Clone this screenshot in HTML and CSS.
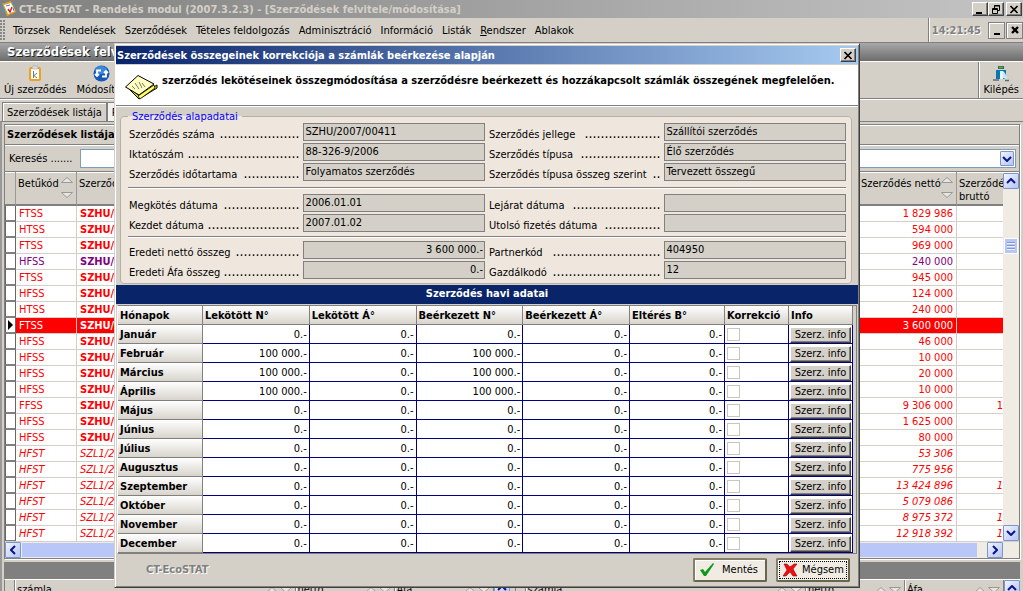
FILE: index.html
```html
<!DOCTYPE html>
<html lang="hu">
<head>
<meta charset="utf-8">
<title>CT-EcoSTAT - Rendelés modul</title>
<link rel="stylesheet" href="styles.css">
</head>
<body>
<div class="app">
  <header class="titlebar">
    <svg class="app-icon" viewBox="0 0 18 18" width="18" height="18"><path d="M2 4l9-3 5 11-9 4z" fill="#e8a020"/><path d="M4 5l7-2 4 8-7 3z" fill="#fff"/><path d="M1 3l4 9M2 9l4 5M12 3l4 3" stroke="#5a8fb0" stroke-width="1.5"/><path d="M8 9l2 3 2-5" stroke="#e02020" stroke-width="1.5" fill="none"/><path d="M6 6l4-1M13 8l1 3" stroke="#5577bb"/></svg>
    <h1 class="title-text">CT-EcoSTAT - Rendelés modul (2007.3.2.3) - [Szerződések felvitele/módosítása]</h1>
    <div class="winbtns">
      <button class="wb" aria-label="Kis méret"><svg width="10" height="9" viewBox="0 0 10 9"><path d="M1 7h6v2H1z"/></svg></button>
      <button class="wb" aria-label="Előző méret"><svg width="10" height="9" viewBox="0 0 10 9"><path d="M3.5 3V.5h5v5H7M3 1h6" fill="none" stroke="#000"/><path d="M1.5 3.5h5v5h-5zM1 4.5h6" fill="none" stroke="#000"/></svg></button>
      <button class="wb wb-close" aria-label="Bezárás"><svg width="10" height="9" viewBox="0 0 10 9"><path d="M1.500 1l7 7M8.500 1l-7 7" stroke="#000" stroke-width="1.700"/></svg></button>
    </div>
  </header>
  <nav class="menubar">
    <span class="grip"></span>
    <ul class="menu">
      <li>Törzsek</li><li>Rendelések</li><li>Szerződések</li><li>Tételes feldolgozás</li><li>Adminisztráció</li><li>Információ</li><li>Listák</li><li><u>R</u>endszer</li><li>Ablakok</li>
    </ul>
    <div class="clock">14:21:45</div>
    <button class="mb" aria-label="Kis méret"><svg width="10" height="9" viewBox="0 0 10 9"><path d="M2 7h6v2H2z"/></svg></button>
    <button class="mb" aria-label="Bezárás"><svg width="10" height="9" viewBox="0 0 10 9"><path d="M2 1l6 6M8 1L2 7" stroke="#000" stroke-width="2.400"/></svg></button>
  </nav>
  <div class="band">Szerződések felvitele/módosítása</div>
  <div class="toolbar">
    <button class="tool"><svg width="16" height="17" viewBox="0 0 16 17"><rect x="2" y="2" width="12" height="14" rx="2" fill="#f0a020"/><rect x="4" y="4" width="8" height="10" fill="#fff"/><rect x="5" y="1" width="6" height="3" rx="1" fill="#ddd" stroke="#999" stroke-width=".5"/><path d="M6.500 6v7M10 8l-3 2.500 3 2.500" stroke="#777" fill="none"/></svg>Új szerződés</button>
    <button class="tool"><svg width="17" height="17" viewBox="0 0 17 17"><circle cx="8.500" cy="8.500" r="8" fill="#1458b8"/><ellipse cx="8" cy="5" rx="6" ry="4" fill="#3d86de"/><path d="M4 11V5.500h4M2 9l2 2 2-2M13 6v5.500H9M11 8l2-2 2 2" stroke="#fff" stroke-width="1.800" fill="none"/></svg>Módosítás</button>
    <button class="tool tool-exit"><svg width="18" height="17" viewBox="0 0 18 17"><rect x="6" y="1" width="6" height="3" fill="#555"/><path d="M7 2.500h4" stroke="#2c4" stroke-width="1.500"/><path d="M4 5h10v9H4z" fill="#0878b0"/><path d="M8 6h3v8H8z" fill="#e8f4fa"/><path d="M11 6l2 2 3 7-5-2z" fill="#c8e8f4"/><path d="M1 15h6M13 15.500h4" stroke="#667" stroke-width="1.500"/></svg>Kilépés</button>
  </div>
  <div class="tabs" role="tablist"><button class="tab tab-on" role="tab">Szerződések listája</button><button class="tab" role="tab">Részletek</button></div>
  <main class="page">
    <section class="panel">
      <h2 class="panel-title">Szerződések listája</h2>
      <div class="search"><label for="q">Keresés .......</label>
        <div class="combo"><input id="q" type="text"><button class="sb" aria-label="Lista megnyitása"><svg width="10" height="6" viewBox="0 0 10 6"><path d="M1 1l4 4 4-4" class="chev"/></svg></button></div>
      </div>
      <div class="list">
        <div class="list-clip">
          <table class="contracts">
            <colgroup><col class="c-ind"><col class="c-code"><col><col class="c-net"><col class="c-gross"></colgroup>
            <thead><tr><th></th><th><div class="hd">Betűkód<span class="sorts"><svg width="12" height="6" viewBox="0 0 12 6"><path d="M.5 5.500h11L6 .5z" class="sort"/></svg><svg width="12" height="6" viewBox="0 0 12 6"><path d="M.5.5h11L6 5.500z" class="sort"/></svg></span></div></th><th>Szerződés száma</th><th><div class="hd">Szerződés nettó<span class="sorts"><svg width="12" height="6" viewBox="0 0 12 6"><path d="M.5 5.500h11L6 .5z" class="sort"/></svg><svg width="12" height="6" viewBox="0 0 12 6"><path d="M.5.5h11L6 5.500z" class="sort"/></svg></span></div></th><th>Szerződés bruttó</th></tr></thead>
            <tbody id="contracts"></tbody>
          </table>
        </div>
        <div class="vscroll"><button class="sb" aria-label="Fel"><svg width="10" height="6" viewBox="0 0 10 6"><path d="M1 5l4-4 4 4" class="chev"/></svg></button><span class="vthumb"></span><button class="sb" aria-label="Le"><svg width="10" height="6" viewBox="0 0 10 6"><path d="M1 1l4 4 4-4" class="chev"/></svg></button></div>
      </div>
      <div class="hscroll"><button class="sb" aria-label="Balra"><svg width="6" height="10" viewBox="0 0 6 10"><path d="M5 1L1 5l4 4" class="chev"/></svg></button><span class="hthumb"></span><button class="sb" aria-label="Jobbra"><svg width="6" height="10" viewBox="0 0 6 10"><path d="M1 1l4 4-4 4" class="chev"/></svg></button></div>
    </section>
    <div class="splitter"></div>
    <section class="details" id="details"></section>
  </main>

  <div class="dialog" role="dialog" aria-labelledby="dlg-title">
    <div class="dlg-bar"><h2 class="dlg-title" id="dlg-title">Szerződések összegeinek korrekciója a számlák beérkezése alapján</h2><button class="wb" aria-label="Bezárás"><svg width="10" height="9" viewBox="0 0 10 9"><path d="M1.500 1l7 7M8.500 1l-7 7" stroke="#000" stroke-width="1.700"/></svg></button></div>
    <div class="dlg-head">
      <svg width="34" height="28" viewBox="0 0 34 28"><path d="M4 14l11 11 18-11v-3L15 22 4 12z" fill="#f0e800" stroke="#000"/><path d="M1.500 13L14 1.500 30 10 15 21z" fill="#ffffc0" stroke="#000"/><path d="M14 22l16-11 1 3-15 11z" fill="#ffff60" stroke="#000" stroke-width=".8"/><path d="M8 12l3 3M11 9l4 6M15 8l3 6M18 9l3 4" stroke="#555" stroke-width=".8"/></svg>
      <p>szerződés lekötéseinek összegmódosítása a szerződésre beérkezett és hozzákapcsolt számlák összegének megfelelően.</p>
    </div>
    <fieldset class="group"><legend>Szerződés alapadatai</legend>
      <div class="fields" id="fields1"></div>
      <hr>
      <div class="fields" id="fields2"></div>
      <hr class="tight">
      <div class="fields" id="fields3"></div>
    </fieldset>
    <h3 class="navy">Szerződés havi adatai</h3>
    <div class="months-box">
      <table class="months">
        <colgroup><col class="m-name"><col><col><col><col><col class="m-diff"><col class="m-fix"><col class="m-fix"></colgroup>
        <thead><tr><th>Hónapok</th><th>Lekötött N°</th><th>Lekötött Á°</th><th>Beérkezett N°</th><th>Beérkezett Á°</th><th>Eltérés B°</th><th>Korrekció</th><th>Info</th></tr></thead>
        <tbody id="months"></tbody>
      </table>
    </div>
    <footer class="dlg-foot"><span class="brand">CT-EcoSTAT</span>
      <button class="act"><svg width="16" height="15" viewBox="0 0 16 15"><path d="M1 8l3-1 2 3 8-9 1 1-8 12H5z" fill="#0a9a1a"/></svg><span>Mentés</span></button>
      <button class="act act-focus"><svg width="16" height="14" viewBox="0 0 16 14"><path d="M2 1h3l3 3 4-3h3l-4 5 4 7h-4L8 9l-4 4H1l4-6z" fill="#e81010" stroke="#a00" stroke-width=".6"/></svg><span>Mégsem</span></button>
    </footer>
  </div>
</div>
<script src="script.js"></script>
</body>
</html>
```

FILE: styles.css
```css
* { box-sizing: border-box; }
body { margin: 0; background: #d4d0c8; color: #000; font: 11px/13px "DejaVu Sans Condensed", "DejaVu Sans", sans-serif; }
button, input { font: inherit; color: inherit; margin: 0; padding: 0; border-radius: 0; }
h1, h2, h3, p, ul { margin: 0; padding: 0; font-size: inherit; }
svg { display: block; flex: none; }
.app { position: relative; display: flex; flex-direction: column; height: 100vh; overflow: hidden; white-space: nowrap; }

.titlebar { display: flex; align-items: center; height: 18px; flex: none; padding-right: 1px; background: linear-gradient(90deg, #808080, #c4c4c4); color: #d4d0c8; }
.title-text { flex: 1; padding-left: 1px; }
.winbtns { display: flex; }
.wb { width: 16px; height: 14px; display: grid; place-items: center; background: #d4d0c8; border: 1px solid; border-color: #fff #404040 #404040 #fff; box-shadow: inset -1px -1px #808080; }
.wb-close { margin-left: 2px; }

.menubar { display: flex; align-items: center; height: 25px; flex: none; border-bottom: 1px solid #808080; box-shadow: 0 1px #fff; gap: 1px; }
.grip { width: 6px; height: 21px; background: radial-gradient(circle at 1px 1px, #888 1px, transparent 1px) 0 0 / 3px 3px; }
.menu { list-style: none; display: flex; flex: 1; gap: 9px; padding-left: 6px; }
.clock { align-self: stretch; display: flex; align-items: center; padding: 0 6px 0 3px; border-left: 1px solid #808080; box-shadow: inset 1px 0 #fff; color: #808080; font-weight: bold; text-shadow: 1px 1px #fff; }
.mb { width: 17px; height: 17px; display: grid; place-items: center; background: #d4d0c8; border: 1px solid #808080; box-shadow: inset 1px 1px #fff; }

.band { height: 18px; flex: none; padding-left: 7px; font-size: 13px; line-height: 18px; font-weight: bold; color: #fff; text-shadow: 1px 1px #222; background: linear-gradient(#a8a8a8, #6c6c6c); }
.toolbar { display: flex; height: 38px; flex: none; border-top: 1px solid #fff; border-bottom: 1px solid #808080; box-shadow: 0 1px #fff; }
.tool { display: flex; flex-direction: column; align-items: center; gap: 1px; padding: 3px 6px 0 4px; background: none; border: 0; }
.tool-exit { margin-left: auto; padding: 3px 4px 0; border-left: 1px solid #808080; box-shadow: inset 1px 0 #fff; }
.tabs { display: flex; height: 22px; flex: none; padding: 3px 0 0 2px; align-items: stretch; }
.tab { background: #f4f2ee; border: 1px solid #808080; border-bottom: 0; padding: 0 4px; }
.tab-on { background: #d4d0c8; box-shadow: inset 1px 1px #fff; }

.page { flex: 1; min-height: 0; display: flex; flex-direction: column; padding: 2px 3px 0 2px; border-left: 2px solid #999; border-top: 1px solid #808080; }
.panel { flex: 1; min-height: 0; display: flex; flex-direction: column; border: 1px solid #808080; box-shadow: 1px 1px #fff; }
.panel-title { height: 20px; line-height: 18px; padding-left: 2px; border-bottom: 1px solid #808080; border-top: 1px solid #fff; flex: none; }
.search { display: flex; align-items: center; height: 27px; flex: none; padding: 0 3px 0 4px; gap: 7px; border-top: 1px solid #fff; border-bottom: 1px solid #808080; }
.combo { flex: 1; display: flex; align-items: center; height: 19px; background: #fff; border: 1px solid #7f9db9; padding-right: 1px; }
.combo input { flex: 1; min-width: 0; border: 0; background: none; padding-left: 3px; }
.combo .sb { width: 14px; height: 15px; }
.sb { width: 16px; height: 16px; flex: none; display: grid; place-items: center; border: 1px solid #7d96c8; border-radius: 1px; background: linear-gradient(135deg, #f0f4ff, #b4c4f4); }
.chev { fill: none; stroke: #0a1488; stroke-width: 2; }
.list { flex: 1; min-height: 0; display: flex; }
.list-clip { flex: 1; min-width: 0; overflow: hidden; background: #fff; }
.contracts { width: 100%; table-layout: fixed; border-collapse: separate; border-spacing: 0; color: #f00; }
.c-ind { width: 11px; } .c-code { width: 61px; } .c-net { width: 98px; } .c-gross { width: 46px; }
.contracts th { height: 34px; padding: 5px 0 0 2px; overflow: hidden; vertical-align: top; text-align: left; font-weight: normal; color: #000; background: #d4d0c8; border-right: 1px solid #999; border-bottom: 2px solid #808080; box-shadow: inset 0 1px #fff; }
.contracts th:last-child { white-space: normal; border-right: 0; }
.hd { display: flex; justify-content: space-between; padding-right: 3px; }
.sorts { display: flex; flex-direction: column; gap: 9px; }
.sort { fill: #e8e6e0; stroke: #999; }
.contracts td { height: 16px; padding: 0 3px; line-height: 15px; overflow: hidden; border-right: 1px solid #d4d0c8; border-bottom: 1px solid #d4d0c8; }
.contracts td:first-child { padding: 0; border-right: 1px solid #666; border-left: 1px solid #666; border-bottom: 2px solid #808080; background: #fff; }
.contracts td:nth-child(n+4) { text-align: right; }
.contracts td:last-child { padding-right: 0; border-right: 0; }
.contracts .num { font-weight: bold; }
.contracts .violet { color: #800080; }
.contracts .slant { font-style: italic; }
.contracts .slant .num { font-weight: normal; }
.contracts .current { background: #f00; color: #fff; }
.arrow { width: 0; margin-left: 2px; border: 5px solid transparent; border-left-color: #000; border-right: 0; }
.vscroll { width: 16px; display: flex; flex-direction: column; background: #f0ece4; border-top: 1px solid #fff; }
.vthumb { height: 16px; margin: 49px 1px auto; border: 1px solid #fff; background: repeating-linear-gradient(#7f9bd0 0 1px, #eef 1px 2px, #b8c6f6 2px 3px) center / 8px 9px no-repeat #b8c6f6; }
.hscroll { display: flex; height: 17px; flex: none; background: #f0ece4; padding-right: 16px; border-top: 1px solid #d4d0c8; }
.hthumb { flex: 1; margin: 1px 10px 1px 1px; background: #b8c6f8; }
.splitter { height: 17px; flex: none; margin-top: 3px; background: #808080; }
.details { display: flex; height: 12px; flex: none; gap: 5px; overflow: hidden; }
.mini { flex: 1; display: flex; border-top: 1px solid #fff; border-left: 1px solid #808080; }
.mini-ind { width: 10px; border-right: 1px solid #808080; }
.mini-c { width: 99px; display: flex; gap: 2px; padding: 3px 3px 0 2px; border-right: 1px solid #808080; box-shadow: inset 1px 0 #fff; }
.mini-c svg { margin-top: 4px; }
.mini-c svg:first-of-type { margin-left: auto; }
.mini-w { flex: 1; }

.dialog { position: absolute; top: 43px; left: 114px; right: 163px; display: flex; flex-direction: column; background: #d4d0c8; border: 1px solid; border-color: #d4d0c8 #404040 #404040 #d4d0c8; box-shadow: inset 1px 1px #fff, inset -1px -1px #808080; padding: 2px 1px 1px 1px; }
.dlg-bar { display: flex; align-items: center; height: 18px; padding: 0 2px 0 1px; color: #fff; background: linear-gradient(90deg, #0a246a, #a6caf0); }
.dlg-title { flex: 1; }
.dlg-head { display: flex; height: 41px; margin-top: 1px; padding: 9px 0 0 8px; gap: 4px; background: #fff; border-bottom: 1px solid #808080; box-shadow: 0 1px #fff; font-weight: bold; }
.group { min-width: 0; margin: 4px 6px 1px 4px; padding: 0 5px 4px 7px; border: 1px solid #b4b0a4; border-radius: 4px; background: #efe7de; }
.group legend { color: #00f; padding: 0 4px; margin: 0; height: 13px; }
.fields { display: grid; grid-template-columns: 175fr 181fr 179fr 181fr; row-gap: 2px; }
.fields label { display: flex; justify-content: space-between; padding: 5px 4px 0 1px; overflow: hidden; height: 18px; }
.fields label:nth-of-type(even) { padding-left: 4px; }
.leader { font-size: 14px; line-height: 10px; }
.fields input { width: 100%; height: 18px; padding: 0 1px 2px; background: #d4d0c8; border: 1px solid #808080; }
.fields .sum { text-align: right; }
.group hr { margin: 6px 0 5px; border: 0; border-top: 1px solid #808080; border-bottom: 1px solid #fff; }
.group hr.tight { margin: 4px 0 3px; }
.navy { height: 19px; line-height: 18px; text-align: center; color: #fff; background: #0a246a; }
.months-box { margin: 1px 1px 0; padding-right: 3px; border: 1px solid; border-color: #808080 #808080 #808080 #fff; }
.months { width: 100%; table-layout: fixed; border-collapse: separate; border-spacing: 0; background: #fff; }
.m-name { width: 85px; } .m-diff { width: 95px; } .m-fix { width: 64px; }
.months th { height: 19px; padding: 0 2px; text-align: left; overflow: hidden; background: linear-gradient(#fff, #d8d4cc); border-right: 1px solid #808080; border-bottom: 1px solid #808080; }
.months td { height: 19px; padding: 2px 2px 0; line-height: 14px; text-align: right; border-right: 1px solid #000080; border-bottom: 1px solid #000080; }
.months td.chk { text-align: left; padding: 0 2px; }
.months td.inf { padding: 1px 1px 0; }
.months input { appearance: none; display: block; width: 13px; height: 13px; border: 1px solid #c9c7ba; background: #fff; }
.info-btn { display: block; width: 100%; height: 16px; line-height: 14px; background: #d4d0c8; border: 1px solid; border-color: #fff #404040 #404040 #fff; box-shadow: inset -1px -1px #808080; }
.dlg-foot { display: flex; align-items: center; gap: 9px; height: 32px; padding: 0 8px 1px 30px; }
.brand { margin-right: auto; font-weight: bold; color: #808080; text-shadow: 1px 1px #fff; }
.act { display: flex; align-items: center; gap: 7px; width: 74px; height: 24px; padding: 0 4px; border: 2px solid; border-color: #858068 #6a664c #6a664c #858068; border-radius: 2px; background: #f0ece4; box-shadow: inset 1px 1px #fff; }
.act-focus { gap: 4px; outline: 1px dotted #000; outline-offset: -4px; }
```

FILE: script.js
```js
const contracts = [
  ["FTSS", "1 829 986"], ["HTSS", "594 000"], ["FTSS", "969 000"], ["HFSS", "240 000", "violet"],
  ["FTSS", "945 000"], ["HFSS", "124 000"], ["HTSS", "240 000"], ["FTSS", "3 600 000", "current"],
  ["HFSS", "46 000"], ["HFSS", "10 000"], ["HFSS", "20 000"], ["HFSS", "10 000"],
  ["FFSS", "9 306 000", "", "1"], ["HFSS", "1 625 000"], ["HFSS", "80 000"],
  ["HFST", "53 306", "slant"], ["HFST", "775 956", "slant"], ["HFST", "13 424 896", "slant", "1"],
  ["HFST", "5 079 086", "slant"], ["HFST", "8 975 372", "slant", "1"], ["HFST", "12 918 392", "slant", "1"],
  ["", ""]
];
document.getElementById("contracts").innerHTML = contracts.map(([code, net, cls = "", gross = ""]) => {
  const num = !code ? "" : cls === "slant" ? "SZL1/2" : "SZHU/";
  const mark = cls === "current" ? '<div class="arrow"></div>' : "";
  return `<tr class="${cls}"><td>${mark}</td><td>${code}</td><td class="num">${num}</td><td>${net}</td><td>${gross}</td></tr>`;
}).join("");

// label, value, number of leader dots, class
const groups = {
  fields1: [["Szerződés száma", "SZHU/2007/00411", 20], ["Szerződés jellege", "Szállítói szerződés", 19],
    ["Iktatószám", "88-326-9/2006", 28], ["Szerződés típusa", "Élő szerződés", 20],
    ["Szerződés időtartama", "Folyamatos szerződés", 14], ["Szerződés típusa összeg szerint", "Tervezett összegű", 2]],
  fields2: [["Megkötés dátuma", "2006.01.01", 19], ["Lejárat dátuma", "", 22],
    ["Kezdet dátuma", "2007.01.02", 23], ["Utolsó fizetés dátuma", "", 14]],
  fields3: [["Eredeti nettó összeg", "3 600 000.-", 16, "sum"], ["Partnerkód", "404950", 27],
    ["Eredeti Áfa összeg", "0.-", 19, "sum"], ["Gazdálkodó", "12", 27]]
};
for (const [id, rows] of Object.entries(groups)) {
  document.getElementById(id).innerHTML = rows.map(([label, value, dots, cls = ""], i) =>
    `<label for="${id}-${i}">${label}<span class="leader">${".".repeat(dots)}</span></label><input id="${id}-${i}" class="${cls}" type="text" readonly value="${value}">`
  ).join("");
}

const names = ["Január", "Február", "Március", "Április", "Május", "Június", "Július", "Augusztus", "Szeptember", "Október", "November", "December"];
document.getElementById("months").innerHTML = names.map((name, i) => {
  const sum = i > 0 && i < 4 ? "100 000.-" : "0.-";
  return `<tr><th scope="row">${name}</th><td>${sum}</td><td>0.-</td><td>${sum}</td><td>0.-</td><td>0.-</td><td class="chk"><input type="checkbox" aria-label="Korrekció: ${name}"></td><td class="inf"><button class="info-btn">Szerz. info</button></td></tr>`;
}).join("");

const sorts = '<svg width="12" height="6" viewBox="0 0 12 6"><path d="M.5 5.5h11L6 .5z" class="sort"/></svg><svg width="12" height="6" viewBox="0 0 12 6"><path d="M.5.5h11L6 5.5z" class="sort"/></svg>';
const mini = '<div class="mini"><span class="mini-ind"></span>' +
  ["számla", "nettó", "Áfa"].map((t, i) => `<span class="mini-c${i ? "" : " mini-w"}">${t}${sorts}</span>`).join("") +
  '<button class="sb" aria-label="Fel"><svg width="10" height="6" viewBox="0 0 10 6"><path d="M1 5l4-4 4 4" class="chev"/></svg></button></div>';
document.getElementById("details").innerHTML = mini + mini;
```
